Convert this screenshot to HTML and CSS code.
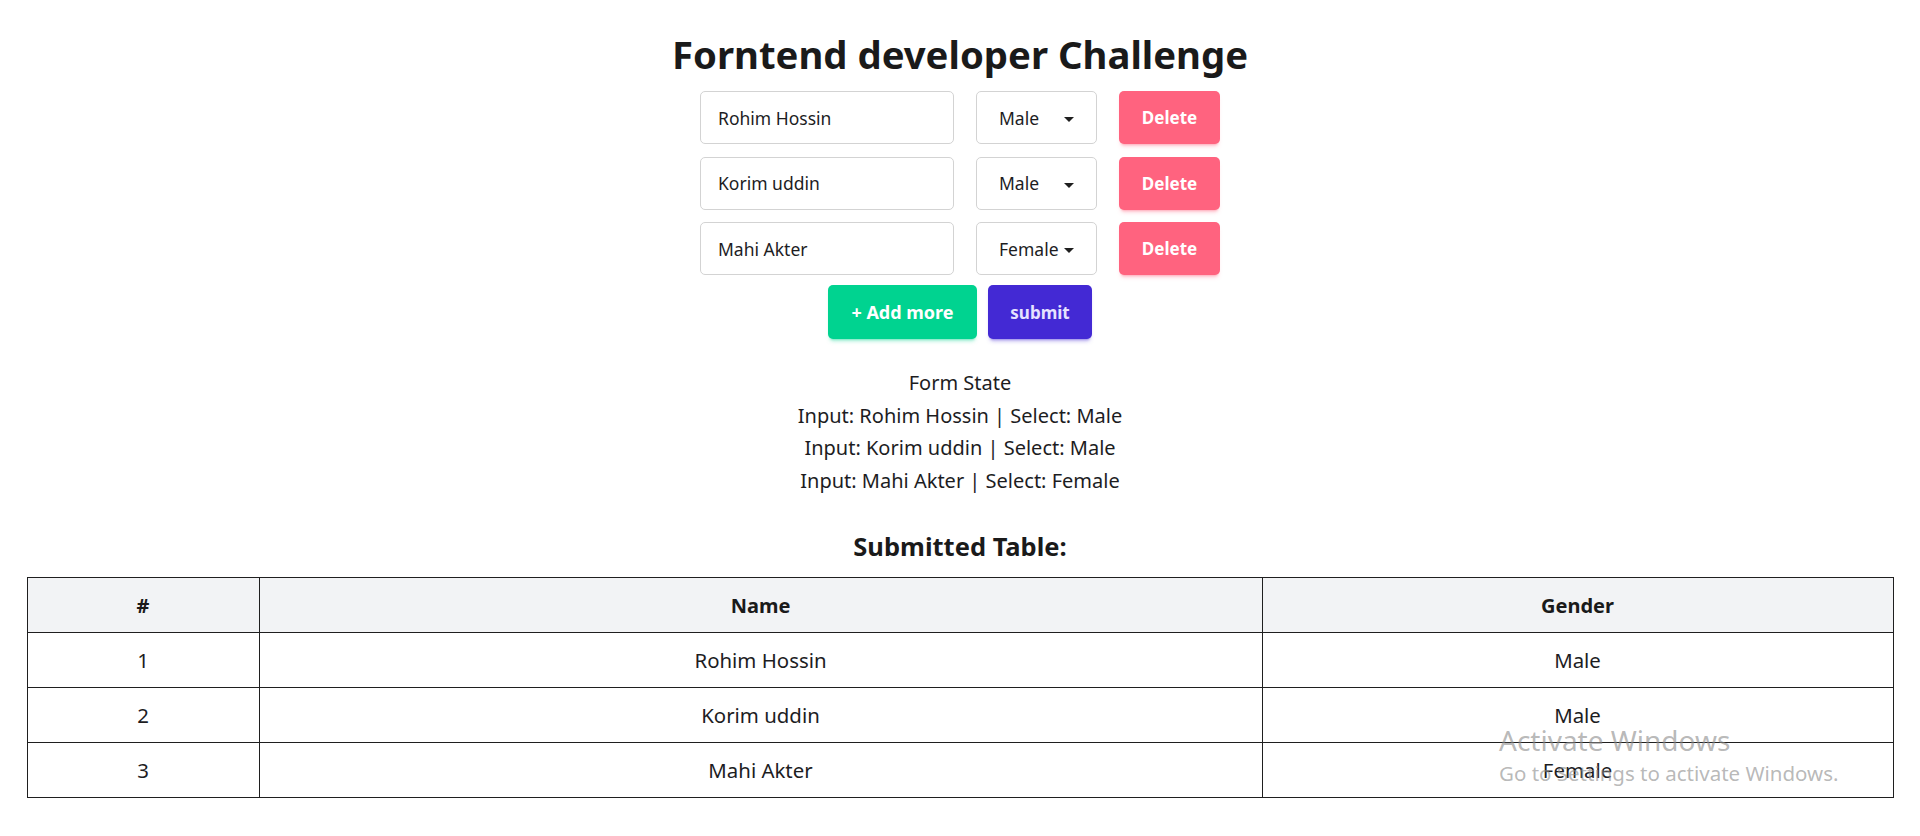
FILE: index.html
```html
<!DOCTYPE html>
<html lang="en">
<head>
<meta charset="utf-8">
<title>Forntend developer Challenge</title>
<link rel="stylesheet" href="styles.css">
</head>
<body>
<main class="page">
  <h1 class="title">Forntend developer Challenge</h1>
  <form class="form">
    <div class="row">
      <input class="field" type="text" value="Rohim Hossin">
      <div class="select-wrap">
        <select class="select"><option selected>Male</option><option>Female</option></select>
        <svg class="caret" width="10" height="5" viewBox="0 0 10 5"><path d="M0 0h10L5 5z" fill="#1f1f1f"/></svg>
      </div>
      <button type="button" class="btn btn-delete">Delete</button>
    </div>
    <div class="row">
      <input class="field" type="text" value="Korim uddin">
      <div class="select-wrap">
        <select class="select"><option selected>Male</option><option>Female</option></select>
        <svg class="caret" width="10" height="5" viewBox="0 0 10 5"><path d="M0 0h10L5 5z" fill="#1f1f1f"/></svg>
      </div>
      <button type="button" class="btn btn-delete">Delete</button>
    </div>
    <div class="row">
      <input class="field" type="text" value="Mahi Akter">
      <div class="select-wrap">
        <select class="select"><option>Male</option><option selected>Female</option></select>
        <svg class="caret" width="10" height="5" viewBox="0 0 10 5"><path d="M0 0h10L5 5z" fill="#1f1f1f"/></svg>
      </div>
      <button type="button" class="btn btn-delete">Delete</button>
    </div>
    <div class="actions">
      <button type="button" class="btn btn-add">+ Add more</button>
      <button type="submit" class="btn btn-submit">submit</button>
    </div>
  </form>

  <section class="state">
    <p>Form State</p>
    <p>Input: Rohim Hossin | Select: Male</p>
    <p>Input: Korim uddin | Select: Male</p>
    <p>Input: Mahi Akter | Select: Female</p>
  </section>

  <h2 class="subtitle">Submitted Table:</h2>
  <table class="table">
    <colgroup>
      <col class="col-idx">
      <col class="col-name">
      <col class="col-gender">
    </colgroup>
    <thead>
      <tr><th>#</th><th>Name</th><th>Gender</th></tr>
    </thead>
    <tbody>
      <tr><td>1</td><td>Rohim Hossin</td><td>Male</td></tr>
      <tr><td>2</td><td>Korim uddin</td><td>Male</td></tr>
      <tr><td>3</td><td>Mahi Akter</td><td>Female</td></tr>
    </tbody>
  </table>
</main>
<div class="watermark">
  <div class="wm-title">Activate Windows</div>
  <div class="wm-sub">Go to Settings to activate Windows.</div>
</div>
</body>
</html>
```

FILE: styles.css
```css
* { box-sizing: border-box; }
html, body { margin: 0; padding: 0; background: #ffffff; }
body {
  font-family: "Noto Sans", "Open Sans", sans-serif;
  color: #1d1d1f;
}
.page {
  padding: 32px 27px 0;
  display: flex;
  flex-direction: column;
  align-items: center;
}
.title {
  margin: 0 0 14px;
  font-size: 38.3px;
  line-height: 45px;
  font-weight: 700;
  color: #1a1a1a;
}
.form {
  display: flex;
  flex-direction: column;
  align-items: center;
  gap: 12.5px;
}
.row {
  display: flex;
  gap: 22px;
  height: 53px;
}
.field {
  width: 254px;
  height: 53px;
  border: 1px solid #d3d3d3;
  border-radius: 5px;
  padding: 0 16px 0 17px;
  font-family: inherit;
  font-size: 17.5px;
  color: #1d1d1f;
  background: #fff;
  outline: none;
}
.select-wrap {
  position: relative;
  width: 121px;
  height: 53px;
}
.select {
  appearance: none;
  -webkit-appearance: none;
  width: 100%;
  height: 100%;
  border: 1px solid #d3d3d3;
  border-radius: 5px;
  padding: 0 30px 0 22px;
  font-family: inherit;
  font-size: 17.5px;
  color: #1d1d1f;
  background: #fff;
  outline: none;
}
.caret {
  position: absolute;
  left: 88px;
  top: 26px;
  pointer-events: none;
}
.btn {
  border: 0;
  border-radius: 5px;
  font-family: inherit;
  font-weight: 700;
  font-size: 17px;
  height: 53px;
  cursor: pointer;
}
.btn-delete {
  width: 101px;
  background: #ff637f;
  color: #ffffff;
  box-shadow: 0 3px 2px -2px rgba(255, 99, 127, .3), 0 4px 4px -2px rgba(255, 99, 127, .35);
}
.actions {
  display: flex;
  gap: 11px;
  margin-top: -2.5px;
}
.btn-add {
  width: 149px;
  height: 54px;
  font-size: 18px;
  background: #00d390;
  color: #ffffff;
  box-shadow: 0 3px 2px -2px rgba(0, 211, 144, .3), 0 4px 4px -2px rgba(0, 211, 144, .35);
}
.btn-submit {
  width: 104px;
  height: 54px;
  background: #4329d4;
  color: #e6e2ff;
  box-shadow: 0 3px 2px -2px rgba(67, 41, 212, .3), 0 4px 4px -2px rgba(67, 41, 212, .35);
}
.state {
  margin-top: 28px;
  text-align: center;
  font-size: 20px;
  line-height: 32.5px;
}
.state p { margin: 0; }
.subtitle {
  margin: 34px 0 0;
  font-size: 25.5px;
  line-height: 30px;
  font-weight: 700;
  color: #1a1a1a;
}
.table {
  margin-top: 16px;
  width: 100%;
  border-collapse: collapse;
  table-layout: fixed;
  font-size: 20.4px;
}
.col-idx { width: 232px; }
.col-name { width: 1003px; }
.col-gender { width: 631px; }
.table th, .table td {
  border: 1px solid #1f1f1f;
  height: 55px;
  padding: 0 12px;
  text-align: center;
  font-weight: 400;
}
.table th {
  background: #f2f3f5;
  font-weight: 700;
  font-size: 20px;
  color: #1a1a1a;
}
.watermark {
  position: absolute;
  left: 1499px;
  top: 722px;
  color: rgba(140, 140, 140, .62);
  font-family: "Noto Sans", sans-serif;
  pointer-events: none;
}
.wm-title { font-size: 28px; line-height: 36px; }
.wm-sub { font-size: 20.5px; line-height: 30px; }
```
